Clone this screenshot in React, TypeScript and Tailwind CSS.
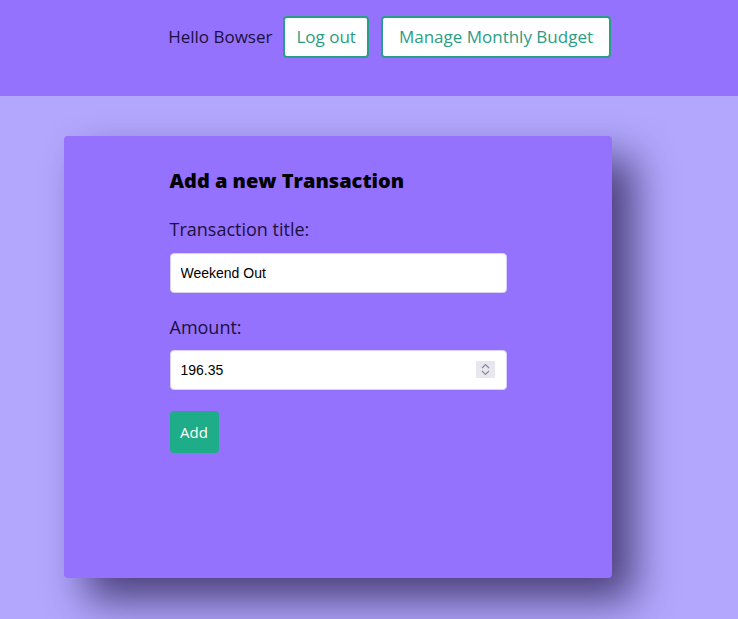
export default function App() {
  const font = { fontFamily: '"Open Sans", sans-serif' }
  const inputFont = { fontFamily: '"Liberation Sans", Arial, sans-serif' }
  return (
    <div className="min-h-[619px] bg-[#b2a7fd]" style={font}>
      <header className="h-[96px] bg-[#9572fe] flex items-start justify-end pr-[127px] pt-[16px] gap-[11px]">
        <span className="h-[42px] flex items-center text-[17px] text-[#1a1040]">Hello Bowser</span>
        <button className="h-[42px] px-[11px] bg-white border-2 border-[#2a9d86] rounded text-[17px] text-[#2a9d86]">
          Log out
        </button>
        <button className="ml-[1px] h-[42px] px-[16px] bg-white border-2 border-[#2a9d86] rounded text-[17px] text-[#2a9d86]">
          Manage Monthly Budget
        </button>
      </header>
      <main className="pt-[40px] pl-[64px]">
        <div className="w-[548px] h-[442px] bg-[#9572fe] rounded shadow-[22px_22px_40px_rgba(40,30,80,0.75)] flex justify-center pt-[34px]">
          <form className="w-[337px] flex flex-col">
            <h2 className="text-[20px] font-extrabold text-black leading-[22px]">Add a new Transaction</h2>
            <label className="mt-[26px] text-[18px] text-[#1a1040] leading-[22px]">Transaction title:</label>
            <input
              defaultValue="Weekend Out"
              className="mt-[13px] h-[40px] bg-white border border-[#d8d0f5] rounded px-[10px] text-[14px] text-black outline-none"
              style={inputFont}
            />
            <label className="mt-[23px] text-[18px] text-[#1a1040] leading-[22px]">Amount:</label>
            <div className="relative mt-[12px]">
              <input
                defaultValue="196.35"
                className="w-full h-[40px] bg-white border border-[#d8d0f5] rounded px-[10px] text-[14px] text-black outline-none"
                style={inputFont}
              />
              <span className="absolute right-[12px] top-[11px] w-[19px] h-[17px] bg-[#e8e6ee] flex flex-col items-center justify-center">
                <svg width="9" height="13" viewBox="0 0 9 13" fill="none" stroke="#8a8a96" strokeWidth="1.2">
                  <path d="M1 5 L4.5 1.5 L8 5" />
                  <path d="M1 8 L4.5 11.5 L8 8" />
                </svg>
              </span>
            </div>
            <button
              type="button"
              className="mt-[21px] w-[49px] h-[42px] bg-[#1fac88] rounded text-white text-[15px]"
            >
              Add
            </button>
          </form>
        </div>
      </main>
    </div>
  )
}
